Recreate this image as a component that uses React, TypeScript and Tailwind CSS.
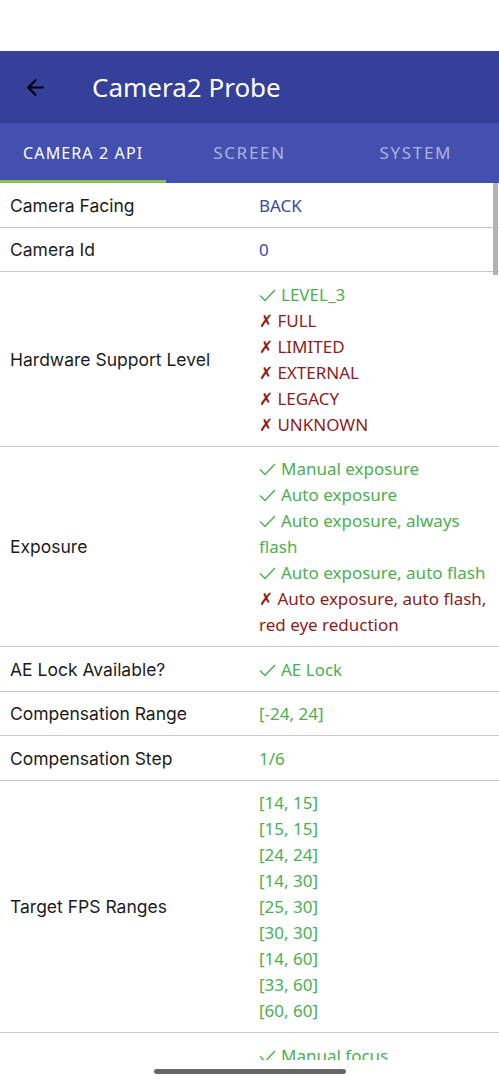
import { ArrowLeft } from "lucide-react";

type Item = { ok: boolean | null; text: string; color?: "blue" | "green" };
type Row = { label: string; values: Item[] };

const ok = (text: string): Item => ({ ok: true, text });
const no = (text: string): Item => ({ ok: false, text });
const plain = (text: string, color: "blue" | "green" = "green"): Item => ({ ok: null, text, color });

const rows: Row[] = [
  { label: "Camera Facing", values: [plain("BACK", "blue")] },
  { label: "Camera Id", values: [plain("0", "blue")] },
  {
    label: "Hardware Support Level",
    values: [ok("LEVEL_3"), no("FULL"), no("LIMITED"), no("EXTERNAL"), no("LEGACY"), no("UNKNOWN")],
  },
  {
    label: "Exposure",
    values: [
      ok("Manual exposure"),
      ok("Auto exposure"),
      ok("Auto exposure, always flash"),
      ok("Auto exposure, auto flash"),
      no("Auto exposure, auto flash, red eye reduction"),
    ],
  },
  { label: "AE Lock Available?", values: [ok("AE Lock")] },
  { label: "Compensation Range", values: [plain("[-24, 24]")] },
  { label: "Compensation Step", values: [plain("1/6")] },
  {
    label: "Target FPS Ranges",
    values: ["[14, 15]", "[15, 15]", "[24, 24]", "[14, 30]", "[25, 30]", "[30, 30]", "[14, 60]", "[33, 60]", "[60, 60]"].map(
      (t) => plain(t)
    ),
  },
  {
    label: "Focus",
    values: [
      ok("Manual focus"),
      ok("Auto focus"),
      ok("Macro"),
      ok("Continuous video"),
      ok("Continuous picture"),
      no("Extended depth of field"),
    ],
  },
];

function Check() {
  return (
    <svg width="17" height="13" viewBox="0 0 17 13" className="inline-block align-[-1px] mr-[5px]">
      <path d="M1 6.5 L6 11.5 L16 1" fill="none" stroke="currentColor" strokeWidth="1.4" />
    </svg>
  );
}

function Value({ item }: { item: Item }) {
  if (item.ok === null) {
    return <div className={item.color === "blue" ? "text-[#3a47a0]" : "text-[#4caf50]"}>{item.text}</div>;
  }
  return item.ok ? (
    <div className="text-[#4caf50]">
      <Check />
      {item.text}
    </div>
  ) : (
    <div className="text-[#8e1c1c]">✗ {item.text}</div>
  );
}

export default function App() {
  return (
    <div className="w-[499px] h-[1080px] bg-white flex flex-col overflow-hidden relative font-['Noto_Sans',sans-serif]">
      {/* status bar */}
      <div className="h-[51px] shrink-0 bg-white" />

      {/* app bar */}
      <div className="h-[72px] shrink-0 bg-[#34409a] flex items-center">
        <ArrowLeft className="ml-[23px] text-black" size={25} strokeWidth={2} />
        <span className="ml-[44px] text-white text-[26px]">Camera2 Probe</span>
      </div>

      {/* tabs */}
      <div className="h-[60px] shrink-0 bg-[#4350b0] grid grid-cols-3 text-[16px] tracking-[0.07em]">
        <div className="relative flex items-center justify-center text-white">
          CAMERA 2 API
          <div className="absolute left-0 right-0 bottom-0 h-[3px] bg-[#8bc34a]" />
        </div>
        <div className="flex items-center justify-center text-white/55 tracking-[0.1em] text-[17px]">SCREEN</div>
        <div className="flex items-center justify-center text-white/55 tracking-[0.1em] text-[17px]">SYSTEM</div>
      </div>

      {/* list */}
      <div className="relative h-[877px] shrink-0 overflow-hidden">
        <div className="absolute right-[1px] top-0 w-[5px] h-[92px] bg-[#b3b3b3]" />
        {rows.map((row) => (
          <div
            key={row.label}
            className="flex items-center border-b border-[#c8c8c8] pt-[9.5px] pb-[8px] text-[17px] leading-[26px]"
          >
            <div className="w-[259px] shrink-0 pl-[10px] text-[#1c1c1c] font-['Inter',sans-serif] text-[17.5px]">
              {row.label}
            </div>
            <div className="w-[232px]">
              {row.values.map((v) => (
                <Value key={v.text} item={v} />
              ))}
            </div>
          </div>
        ))}
      </div>

      {/* nav area */}
      <div className="flex-1 flex items-center justify-center">
        <div className="w-[192px] h-[5px] rounded-full bg-[#666] mt-[2px]" />
      </div>
    </div>
  );
}
